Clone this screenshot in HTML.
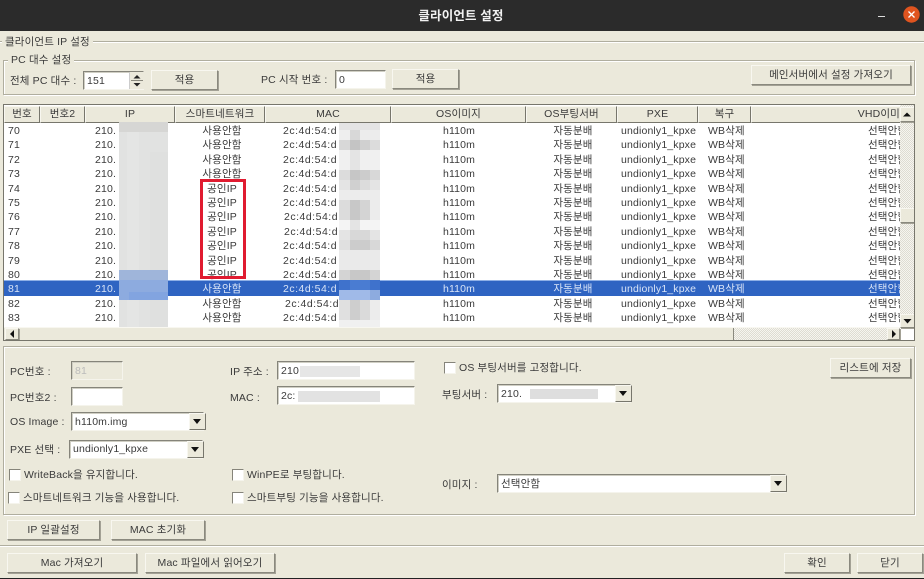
<!DOCTYPE html>
<html lang="ko"><head><meta charset="utf-8"><title>클라이언트 설정</title>
<style>
html,body{margin:0;padding:0}
body{width:924px;height:579px;overflow:hidden;position:relative;background:#ebe9db;color:#3a3a3a;font:10.5px/14px "Liberation Sans","Noto Sans CJK KR",sans-serif;letter-spacing:.15px}
.a{position:absolute;white-space:nowrap}
#tb{left:0;top:0;width:924px;height:31px;background:#2b2b2b}
#tt{left:-1px;top:8px;width:924px;text-align:center;color:#f2f2f2;font:bold 12.500px/16px "Liberation Sans","Noto Sans CJK KR",sans-serif}
.gl{position:absolute;border:1px solid #b0ae9f;box-shadow:inset 1px 1px 0 #fff,1px 1px 0 #fff}
.lg{position:absolute;background:#ebe9db;padding:0 3px;white-space:nowrap;height:14px}
.b{position:absolute;box-sizing:border-box;background:#ebe9db;border:1px solid;border-color:#f8f7f0 #8a897e #8a897e #f8f7f0;box-shadow:1px 1px 0 #a3a195;text-align:center;white-space:nowrap}
.in{position:absolute;box-sizing:border-box;background:#fff;border:1px solid;border-color:#85847a #f5f4ec #f5f4ec #85847a;box-shadow:inset 1px 1px 0 #d0cfc4;padding-left:3px;white-space:nowrap;overflow:hidden}
.ar{position:absolute;box-sizing:border-box;width:17px;background:#ebe9db;border:1px solid;border-color:#f8f7f0 #77766c #77766c #f8f7f0}
.ar:after{content:"";position:absolute;left:3px;top:5px;border:4px solid transparent;border-top:5px solid #111;border-bottom:0}
.cb{position:absolute;box-sizing:border-box;width:12px;height:12px;background:#fff;border:1px solid;border-color:#85847a #f5f4ec #f5f4ec #85847a}
#list{position:absolute;left:3px;top:104px;width:912px;height:237px;box-sizing:border-box;border:1px solid #77766c;background:#fff;overflow:hidden}
.h{position:absolute;top:1px;height:17px;box-sizing:border-box;background:#ebe9db;border:1px solid;border-color:#f8f7f0 #77766c #77766c #f8f7f0;text-align:center;line-height:15px;white-space:nowrap;overflow:hidden}
#rows{position:absolute;left:0;top:0;width:896px;height:222px;overflow:hidden}
.r{position:absolute;left:0;width:896px;height:14.4px;line-height:14px;white-space:nowrap}
.r span{position:absolute;top:1px}
.s{background:#2f64c2;color:#d9e4f7;box-shadow:0 -1px 0 #8fb0e6}
.n{left:4px}.i{left:91px}.w{left:168px;width:100px;text-align:center}.m{left:279px;letter-spacing:.5px}
.o{left:405px;width:100px;text-align:center}.f{left:519px;width:100px;text-align:center}
.p{left:617px}.v{left:704px}.g{left:864px}
.d{background:repeating-conic-gradient(#dedcd2 0 25%,#f6f5ef 0 50%) 0 0/2px 2px}
</style></head><body>
<div class="a" id="tb"></div><div class="a" id="tt">클라이언트 설정</div>
<div class="a" style="left:878px;top:16px;width:7px;height:1px;background:#ddd"></div>
<svg class="a" style="left:903px;top:6px" width="17" height="17"><circle cx="8.5" cy="8.5" r="8.2" fill="#e0541f"/><path d="M5.5 5.500l6 6M11.5 5.500l-6 6" stroke="#fff" stroke-width="1.3"/></svg>

<div class="gl" style="left:-3px;top:41px;width:940px;height:503px"></div>
<div class="lg" style="left:2px;top:35px">클라이언트 IP 설정</div>
<div class="gl" style="left:3px;top:60px;width:910px;height:33px"></div>
<div class="lg" style="left:8px;top:53px">PC 대수 설정</div>
<div class="a" style="left:10px;top:74px">전체 PC 대수 :</div>
<div class="in" style="left:83px;top:71px;width:61px;height:19px;line-height:18px">151</div>
<div class="a" style="left:129px;top:72px;width:15px;height:17px;background:#ebe9db;border-left:1px solid #ccc"></div>
<svg class="a" style="left:130px;top:72px" width="14" height="17"><path d="M7 3l3.500 3.500h-7z" fill="#222"/><path d="M1 8.500h12" stroke="#8a897e"/><path d="M3.500 11h7l-3.500 3.500z" fill="#222"/></svg>
<div class="b" style="left:151px;top:70px;width:67px;height:20px;line-height:19px">적용</div>
<div class="a" style="left:261px;top:73px">PC 시작 번호 :</div>
<div class="in" style="left:335px;top:70px;width:51px;height:19px;line-height:18px">0</div>
<div class="b" style="left:392px;top:69px;width:67px;height:20px;line-height:19px">적용</div>
<div class="b" style="left:751px;top:65px;width:160px;height:20px;line-height:19px">메인서버에서 설정 가져오기</div>

<div id="list">
<div id="rows">
<div class="r" style="top:18px"><span class="n">70</span><span class="i">210.</span><span class="w">사용안함</span><span class="m">2c:4d:54:d</span><span class="o">h110m</span><span class="f">자동분배</span><span class="p">undionly1_kpxe</span><span class="v">WB삭제</span><span class="g">선택안함</span></div>
<div class="r" style="top:32.400px"><span class="n">71</span><span class="i">210.</span><span class="w">사용안함</span><span class="m">2c:4d:54:d</span><span class="o">h110m</span><span class="f">자동분배</span><span class="p">undionly1_kpxe</span><span class="v">WB삭제</span><span class="g">선택안함</span></div>
<div class="r" style="top:46.800px"><span class="n">72</span><span class="i">210.</span><span class="w">사용안함</span><span class="m">2c:4d:54:d</span><span class="o">h110m</span><span class="f">자동분배</span><span class="p">undionly1_kpxe</span><span class="v">WB삭제</span><span class="g">선택안함</span></div>
<div class="r" style="top:61.200px"><span class="n">73</span><span class="i">210.</span><span class="w">사용안함</span><span class="m">2c:4d:54:d</span><span class="o">h110m</span><span class="f">자동분배</span><span class="p">undionly1_kpxe</span><span class="v">WB삭제</span><span class="g">선택안함</span></div>
<div class="r" style="top:75.600px"><span class="n">74</span><span class="i">210.</span><span class="w">공인IP</span><span class="m">2c:4d:54:d</span><span class="o">h110m</span><span class="f">자동분배</span><span class="p">undionly1_kpxe</span><span class="v">WB삭제</span><span class="g">선택안함</span></div>
<div class="r" style="top:90px"><span class="n">75</span><span class="i">210.</span><span class="w">공인IP</span><span class="m">2c:4d:54:d</span><span class="o">h110m</span><span class="f">자동분배</span><span class="p">undionly1_kpxe</span><span class="v">WB삭제</span><span class="g">선택안함</span></div>
<div class="r" style="top:104.400px"><span class="n">76</span><span class="i">210.</span><span class="w">공인IP</span><span class="m" style="left:280px">2c:4d:54:d</span><span class="o">h110m</span><span class="f">자동분배</span><span class="p">undionly1_kpxe</span><span class="v">WB삭제</span><span class="g">선택안함</span></div>
<div class="r" style="top:118.800px"><span class="n">77</span><span class="i">210.</span><span class="w">공인IP</span><span class="m" style="left:280px">2c:4d:54:d</span><span class="o">h110m</span><span class="f">자동분배</span><span class="p">undionly1_kpxe</span><span class="v">WB삭제</span><span class="g">선택안함</span></div>
<div class="r" style="top:133.200px"><span class="n">78</span><span class="i">210.</span><span class="w">공인IP</span><span class="m">2c:4d:54:d</span><span class="o">h110m</span><span class="f">자동분배</span><span class="p">undionly1_kpxe</span><span class="v">WB삭제</span><span class="g">선택안함</span></div>
<div class="r" style="top:147.600px"><span class="n">79</span><span class="i">210.</span><span class="w">공인IP</span><span class="m">2c:4d:54:d</span><span class="o">h110m</span><span class="f">자동분배</span><span class="p">undionly1_kpxe</span><span class="v">WB삭제</span><span class="g">선택안함</span></div>
<div class="r" style="top:162px"><span class="n">80</span><span class="i">210.</span><span class="w">공인IP</span><span class="m">2c:4d:54:d</span><span class="o">h110m</span><span class="f">자동분배</span><span class="p">undionly1_kpxe</span><span class="v">WB삭제</span><span class="g">선택안함</span></div>
<div class="r s" style="top:176.400px"><span class="n">81</span><span class="i">210.</span><span class="w">사용안함</span><span class="m">2c:4d:54:d</span><span class="o">h110m</span><span class="f">자동분배</span><span class="p">undionly1_kpxe</span><span class="v">WB삭제</span><span class="g">선택안함</span></div>
<div class="r" style="top:190.800px"><span class="n">82</span><span class="i">210.</span><span class="w">사용안함</span><span class="m" style="left:281px">2c:4d:54:d</span><span class="o">h110m</span><span class="f">자동분배</span><span class="p">undionly1_kpxe</span><span class="v">WB삭제</span><span class="g">선택안함</span></div>
<div class="r" style="top:205.200px"><span class="n">83</span><span class="i">210.</span><span class="w">사용안함</span><span class="m">2c:4d:54:d</span><span class="o">h110m</span><span class="f">자동분배</span><span class="p">undionly1_kpxe</span><span class="v">WB삭제</span><span class="g">선택안함</span></div>
</div>
<div class="h" style="left:0;width:36px">번호</div>
<div class="h" style="left:36px;width:45px">번호2</div>
<div class="h" style="left:81px;width:90px">IP</div>
<div class="h" style="left:171px;width:90px">스마트네트워크</div>
<div class="h" style="left:261px;width:126px">MAC</div>
<div class="h" style="left:387px;width:135px">OS이미지</div>
<div class="h" style="left:522px;width:91px">OS부팅서버</div>
<div class="h" style="left:613px;width:81px">PXE</div>
<div class="h" style="left:694px;width:53px">복구</div>
<div class="h" style="left:747px;width:150px;text-align:right">VHD이미</div>
<div class="a" style="left:0;top:222px;width:896px;height:13px;background:#ebe9db;border-top:1px solid #f8f7f0"></div>
<div class="a d" style="left:896px;top:0;width:15px;height:235px"></div>
<div class="a d" style="left:729px;top:223px;width:167px;height:13px;border-left:1px solid #8a897e"></div>
<div class="a" style="left:896px;top:222px;width:15px;height:14px;background:#fff"></div>
<div class="b" style="left:896px;top:2px;width:15px;height:15px"></div>
<svg class="a" style="left:896px;top:2px" width="15" height="15"><path d="M3 9.500h8l-4-4z" fill="#111"/></svg>
<div class="b" style="left:896px;top:209px;width:15px;height:14px"></div>
<svg class="a" style="left:896px;top:209px" width="15" height="14"><path d="M3.500 5h8l-4 4.500z" fill="#111"/></svg>
<div class="b" style="left:896px;top:103px;width:15px;height:15px"></div>
<div class="b" style="left:1px;top:223px;width:14px;height:12px"></div>
<svg class="a" style="left:1px;top:223px" width="14" height="12"><path d="M9 2v8l-4-4z" fill="#111"/></svg>
<div class="b" style="left:883px;top:223px;width:13px;height:12px"></div>
<svg class="a" style="left:883px;top:223px" width="13" height="12"><path d="M5 2v8l4-4z" fill="#111"/></svg>
</div>

<svg class="a" style="left:119px;top:122px" width="49" height="205">
<rect width="49" height="205" fill="#e1e2e1"/>
<rect width="49" height="10" fill="#d6d6d4"/>
<rect x="8" width="12" y="10" height="195" fill="#e4e5e4"/>
<rect x="31" y="30" width="18" height="175" fill="#dfe0df"/>
<rect y="148" width="49" height="10" fill="#9fb5da"/>
<rect y="158" width="49" height="20" fill="#8dabdf"/>
<rect y="170" x="10" width="39" height="8" fill="#82a4e0"/>
</svg>
<svg class="a" style="left:339px;top:123px" width="41" height="204" shape-rendering="crispEdges">
<rect width="41" height="204" fill="#ececec"/>
<rect y="0" width="41" height="7" fill="#e4e4e4"/>
<rect y="7" width="11" height="10" fill="#eeeeee"/><rect x="11" y="7" width="10" height="10" fill="#d8d8d8"/>
<rect y="17" width="11" height="10" fill="#d8d8d8"/><rect x="11" y="17" width="10" height="10" fill="#c4c4c4"/><rect x="21" y="17" width="10" height="10" fill="#d0d0d0"/><rect x="31" y="17" width="10" height="10" fill="#dcdcdc"/>
<rect y="27" width="41" height="20" fill="#f0f0f0"/><rect x="11" y="27" width="10" height="20" fill="#e4e4e4"/>
<rect y="47" width="11" height="10" fill="#dcdcdc"/><rect x="11" y="47" width="10" height="10" fill="#c6c6c6"/><rect x="21" y="47" width="10" height="10" fill="#cccccc"/><rect x="31" y="47" width="10" height="10" fill="#d8d8d8"/>
<rect y="57" width="41" height="10" fill="#e4e4e4"/><rect x="11" y="57" width="10" height="10" fill="#d0d0d0"/><rect x="21" y="57" width="10" height="10" fill="#dcdcdc"/>
<rect y="77" width="11" height="20" fill="#dcdcdc"/><rect x="11" y="77" width="10" height="20" fill="#c8c8c8"/><rect x="21" y="77" width="10" height="20" fill="#d4d4d4"/>
<rect y="97" width="41" height="10" fill="#f4f4f4"/><rect x="11" y="97" width="10" height="10" fill="#e4e4e4"/>
<rect y="107" width="41" height="10" fill="#e4e4e4"/><rect x="11" y="107" width="20" height="10" fill="#d8d8d8"/>
<rect y="117" width="41" height="10" fill="#d8d8d8"/><rect x="0" y="117" width="11" height="10" fill="#e0e0e0"/><rect x="11" y="117" width="20" height="10" fill="#cccccc"/>
<rect y="127" width="41" height="20" fill="#eaeaea"/>
<rect y="147" width="41" height="10" fill="#d4d4d4"/><rect x="11" y="147" width="20" height="10" fill="#c8c8c8"/>
<rect y="157" width="41" height="10" fill="#3f72cc"/><rect x="11" y="157" width="20" height="10" fill="#4a7cd2"/>
<rect y="167" width="41" height="10" fill="#a0bae8"/><rect x="31" y="167" width="10" height="10" fill="#8dabdf"/>
<rect y="177" width="11" height="20" fill="#e0e0e0"/><rect x="11" y="177" width="10" height="20" fill="#cecece"/><rect x="21" y="177" width="10" height="20" fill="#dadada"/>
<rect y="197" width="41" height="7" fill="#f0f0f0"/>
</svg>

<div class="a" style="left:200px;top:179px;width:40px;height:94px;border:3px solid #e01b30"></div>

<div class="gl" style="left:3px;top:346px;width:910px;height:167px"></div>
<div class="a" style="left:10px;top:365px">PC번호 :</div>
<div class="in" style="left:71px;top:361px;width:52px;height:19px;background:#ebe9db;color:#bbb;line-height:18px">81</div>
<div class="a" style="left:10px;top:391px">PC번호2 :</div>
<div class="in" style="left:71px;top:387px;width:52px;height:19px"></div>
<div class="a" style="left:10px;top:415px">OS Image :</div>
<div class="in" style="left:71px;top:412px;width:133px;height:19px;line-height:19px">h110m.img</div><div class="ar" style="left:189px;top:413px;height:17px"></div>
<div class="a" style="left:10px;top:443px">PXE 선택 :</div>
<div class="in" style="left:69px;top:440px;width:134px;height:19px;line-height:17px">undionly1_kpxe</div><div class="ar" style="left:187px;top:441px;height:17px"></div>
<div class="cb" style="left:9px;top:469px"></div><div class="a" style="left:24px;top:468px">WriteBack을 유지합니다.</div>
<div class="cb" style="left:232px;top:469px"></div><div class="a" style="left:247px;top:468px">WinPE로 부팅합니다.</div>
<div class="cb" style="left:8px;top:492px"></div><div class="a" style="left:23px;top:491px">스마트네트워크 기능을 사용합니다.</div>
<div class="cb" style="left:232px;top:492px"></div><div class="a" style="left:247px;top:491px">스마트부팅 기능을 사용합니다.</div>
<div class="a" style="left:230px;top:365px">IP 주소 :</div>
<div class="in" style="left:277px;top:361px;width:138px;height:19px;line-height:19px">210</div>
<div class="a" style="left:300px;top:366px;width:60px;height:11px;background:#e6e6e6"></div>
<div class="a" style="left:230px;top:391px">MAC :</div>
<div class="in" style="left:277px;top:386px;width:138px;height:19px;line-height:19px">2c:</div>
<div class="a" style="left:298px;top:391px;width:82px;height:11px;background:#e2e2e2"></div>
<div class="cb" style="left:444px;top:362px"></div><div class="a" style="left:459px;top:361px">OS 부팅서버를 고정합니다.</div>
<div class="a" style="left:442px;top:388px">부팅서버 :</div>
<div class="in" style="left:497px;top:384px;width:134px;height:19px;line-height:18px">210.</div><div class="ar" style="left:615px;top:385px;height:17px"></div>
<div class="a" style="left:530px;top:389px;width:68px;height:10px;background:#dedede"></div>
<div class="a" style="left:442px;top:478px">이미지 :</div>
<div class="in" style="left:497px;top:474px;width:289px;height:19px;line-height:18px">선택안함</div><div class="ar" style="left:770px;top:475px;height:17px"></div>
<div class="b" style="left:830px;top:358px;width:81px;height:20px;line-height:19px">리스트에 저장</div>
<div class="b" style="left:7px;top:520px;width:93px;height:20px;line-height:18px">IP 일괄설정</div>
<div class="b" style="left:111px;top:520px;width:94px;height:20px;line-height:18px">MAC 초기화</div>
<div class="b" style="left:7px;top:553px;width:130px;height:20px;line-height:18px">Mac 가져오기</div>
<div class="b" style="left:145px;top:553px;width:130px;height:20px;line-height:18px">Mac 파일에서 읽어오기</div>
<div class="b" style="left:784px;top:553px;width:66px;height:20px;line-height:18px">확인</div>
<div class="b" style="left:857px;top:553px;width:66px;height:20px;line-height:18px">닫기</div>
<div class="a" style="left:0;top:578px;width:924px;height:1px;background:#222"></div>
</body></html>
